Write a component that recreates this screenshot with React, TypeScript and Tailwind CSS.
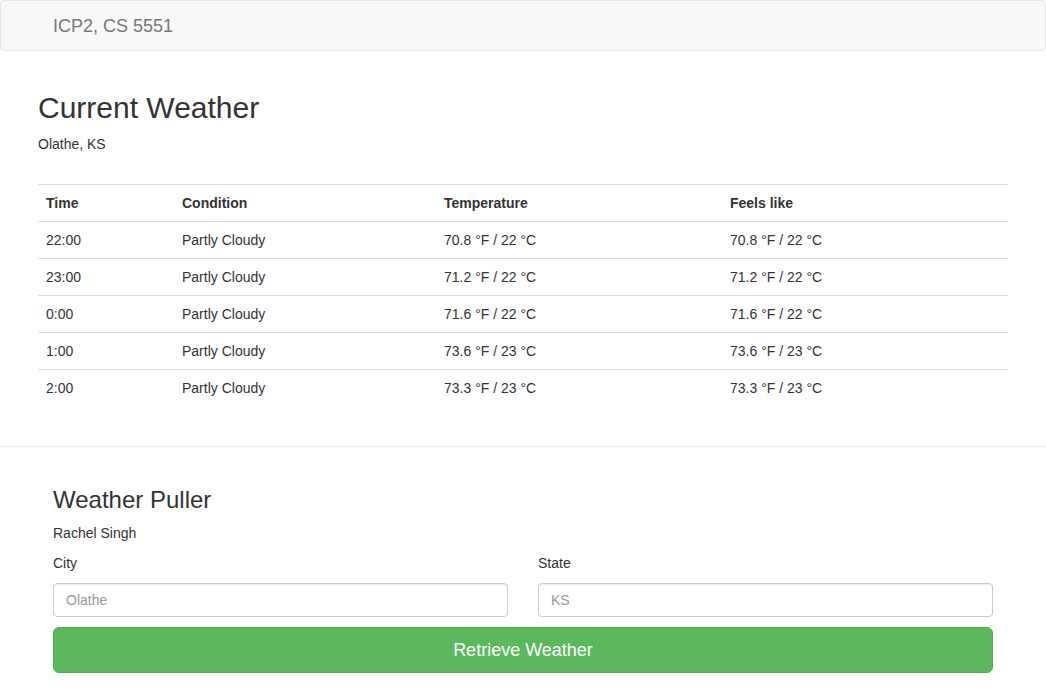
import React from 'react';

const rows = [
  { time: '22:00', cond: 'Partly Cloudy', temp: '70.8 °F / 22 °C', feels: '70.8 °F / 22 °C' },
  { time: '23:00', cond: 'Partly Cloudy', temp: '71.2 °F / 22 °C', feels: '71.2 °F / 22 °C' },
  { time: '0:00', cond: 'Partly Cloudy', temp: '71.6 °F / 22 °C', feels: '71.6 °F / 22 °C' },
  { time: '1:00', cond: 'Partly Cloudy', temp: '73.6 °F / 23 °C', feels: '73.6 °F / 23 °C' },
  { time: '2:00', cond: 'Partly Cloudy', temp: '73.3 °F / 23 °C', feels: '73.3 °F / 23 °C' },
];

export default function App() {
  return (
    <div className="min-h-screen bg-white text-[14px] leading-[20px] text-[#333] font-['Liberation_Sans',Arial,sans-serif]">
      {/* Navbar */}
      <nav className="h-[51px] bg-[#f8f8f8] border border-[#e7e7e7] rounded-[4px] flex items-center">
        <span className="ml-[52px] text-[18px] leading-[20px] text-[#777]">ICP2, CS 5551</span>
      </nav>

      {/* Current weather */}
      <div className="w-[970px] mx-auto">
        <h1 className="mt-[40px] mb-[10px] text-[30px] leading-[33px] font-normal">Current Weather</h1>
        <p className="mb-[30px]">Olathe, KS</p>

        <table className="w-full border-collapse mb-[40px]">
          <tbody>
            <tr className="border-t border-[#ddd] font-bold">
              <td className="w-[136px] p-[8px]">Time</td>
              <td className="w-[262px] p-[8px]">Condition</td>
              <td className="w-[286px] p-[8px]">Temperature</td>
              <td className="p-[8px]">Feels like</td>
            </tr>
            {rows.map((r) => (
              <tr key={r.time} className="border-t border-[#ddd]">
                <td className="p-[8px]">{r.time}</td>
                <td className="p-[8px]">{r.cond}</td>
                <td className="p-[8px]">{r.temp}</td>
                <td className="p-[8px]">{r.feels}</td>
              </tr>
            ))}
          </tbody>
        </table>
      </div>

      <hr className="border-0 border-t border-[#eee]" />

      {/* Weather puller form */}
      <div className="w-[970px] mx-auto px-[15px]">
        <h3 className="mt-[40px] mb-[10px] text-[24px] leading-[26px] font-normal">Weather Puller</h3>
        <p className="mb-[10px]">Rachel Singh</p>

        <div className="grid grid-cols-2 gap-[30px]">
          <div>
            <label className="block mb-[10px]">City</label>
            <input
              placeholder="Olathe"
              className="w-full h-[34px] px-[12px] border border-[#ccc] rounded-[4px] shadow-[inset_0_1px_1px_rgba(0,0,0,0.075)] placeholder:text-[#999] outline-none"
            />
          </div>
          <div>
            <label className="block mb-[10px]">State</label>
            <input
              placeholder="KS"
              className="w-full h-[34px] px-[12px] border border-[#ccc] rounded-[4px] shadow-[inset_0_1px_1px_rgba(0,0,0,0.075)] placeholder:text-[#999] outline-none"
            />
          </div>
        </div>

        <button className="mt-[10px] w-full h-[46px] bg-[#5cb85c] border border-[#4cae4c] rounded-[6px] text-white text-[18px]">
          Retrieve Weather
        </button>
      </div>
    </div>
  );
}
